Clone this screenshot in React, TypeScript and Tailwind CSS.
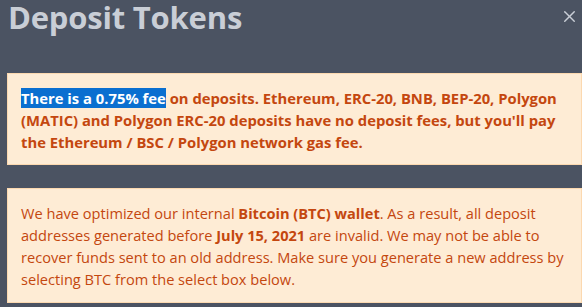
import { X } from 'lucide-react'

export default function App() {
  return (
    <div
      className="h-[307px] w-[582px] overflow-hidden bg-[#4b5362]"
      style={{ fontFamily: '"Open Sans", "Noto Sans", sans-serif' }}
    >
      <div className="flex items-start justify-between pl-2 pr-[3px]">
        <h2 className="text-[31px] font-bold leading-[34px] text-[#c9ced6] tracking-[-0.2px]">
          Deposit Tokens
        </h2>
        <button type="button" className="mt-[7px] text-[#c9ced6]">
          <X size={19} strokeWidth={1.8} />
        </button>
      </div>

      <div className="mt-[39px] flex flex-col gap-[23px] pl-[7px]">
        <div className="border border-[#fcd9b0] bg-[#feecd5] px-[13px] pt-[13px] pb-[11px] text-[14.8px] font-bold leading-[22px] text-[#c4470f]">
          <span className="bg-[#0a6fd0] text-white">There is a 0.75% fee</span> on deposits.
          Ethereum, ERC-20, BNB, BEP-20, Polygon (MATIC) and Polygon ERC-20 deposits have no
          deposit fees, but you'll pay the Ethereum / BSC / Polygon network gas fee.
        </div>

        <div className="border border-[#fcd9b0] bg-[#feecd5] px-[13px] pt-[13px] pb-[12px] text-[14.6px] leading-[22px] text-[#c4470f]">
          We have optimized our internal <b>Bitcoin (BTC) wallet</b>. As a result, all deposit
          addresses generated before <b>July 15, 2021</b> are invalid. We may not be able to
          recover funds sent to an old address. Make sure you generate a new address by
          selecting BTC from the select box below.
        </div>
      </div>
    </div>
  )
}
